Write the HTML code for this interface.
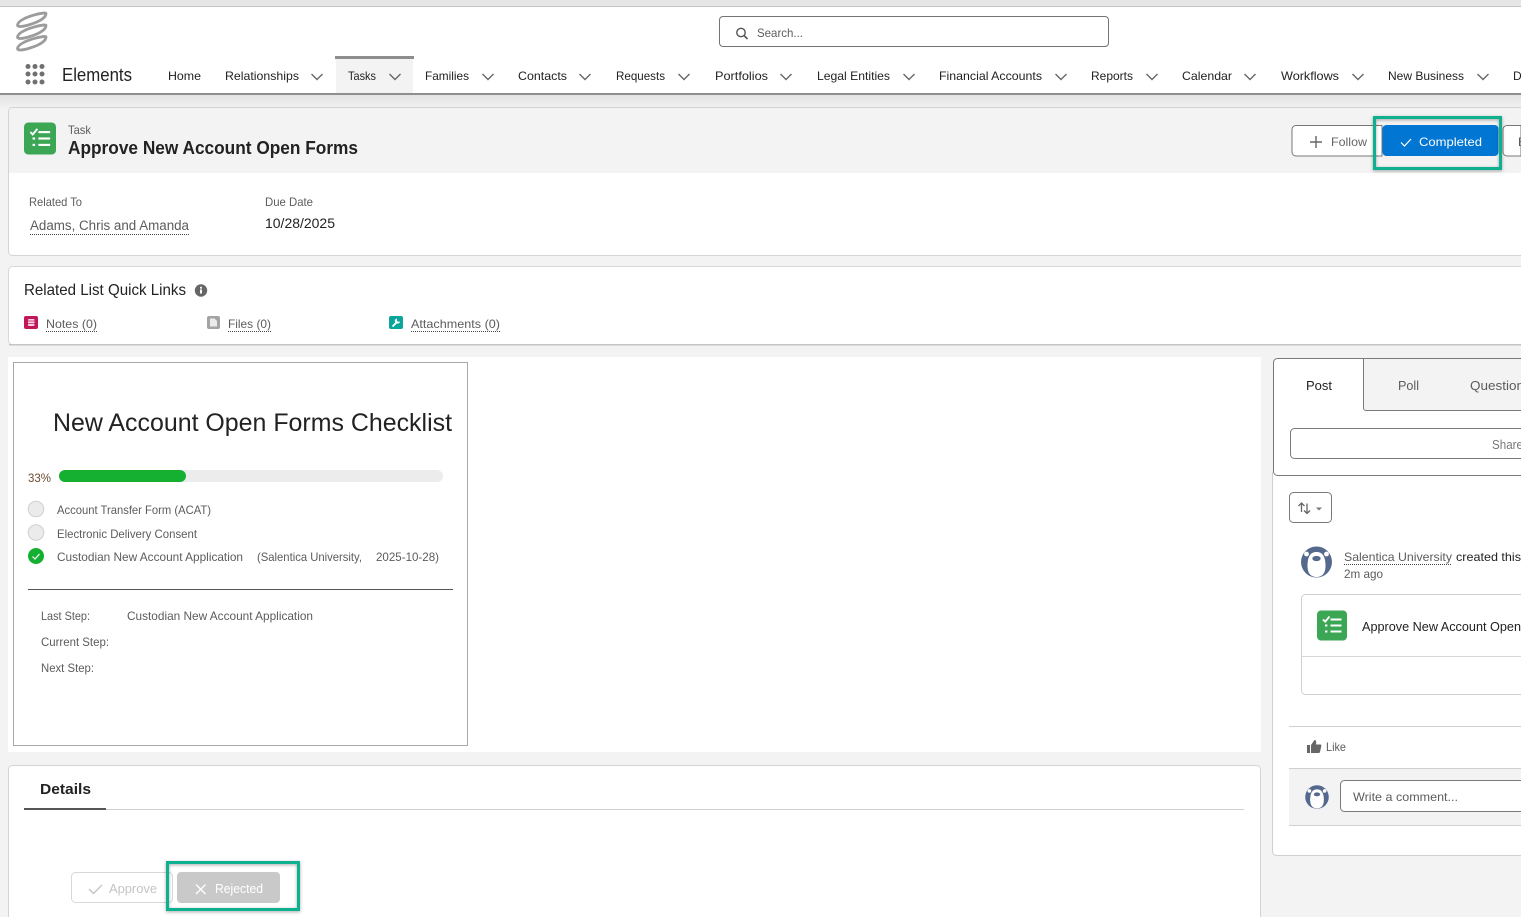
<!DOCTYPE html>
<html lang="en"><head><meta charset="utf-8"><title>Task - Approve New Account Open Forms</title>
<style>
html,body{margin:0;padding:0;width:1521px;height:917px;overflow:hidden;background:#f3f3f3}
svg{display:block}
text{font-family:"Liberation Sans",sans-serif;font-size:12px;fill:#3a3a3a}
.d{fill:#222}
.g{fill:#5c5c5c}
.u{stroke:#444;stroke-width:1;stroke-dasharray:1 1;fill:none}
.c{fill:none;stroke:#666;stroke-width:1.4}
</style></head><body>
<svg xmlns="http://www.w3.org/2000/svg" width="1521" height="917" viewBox="0 0 1521 917">
<defs>
<linearGradient id="sh" x1="0" y1="0" x2="0" y2="1"><stop offset="0" stop-color="#e2e2e2"/><stop offset="1" stop-color="#f3f3f3"/></linearGradient>
<filter id="bs" x="-10%" y="-20%" width="120%" height="140%"><feDropShadow dx="0" dy="1" stdDeviation="1.5" flood-color="#000" flood-opacity=".35"/></filter>
<g id="ck"><rect x="0" y="0" width="30" height="30" rx="4" fill="#3ba755"/><path d="M6 9l2.2 2.2L12.5 6" fill="none" stroke="#fff" stroke-width="1.8"/><rect x="13.5" y="8" width="11" height="2" fill="#fff"/><rect x="13.5" y="14" width="11" height="2" fill="#fff"/><rect x="13.5" y="20" width="11" height="2" fill="#fff"/><rect x="8" y="14" width="2.4" height="2" fill="#fff"/><rect x="8" y="20" width="2.4" height="2" fill="#fff"/></g>
<clipPath id="av1"><circle cx="0" cy="0" r="15.5"/></clipPath>
<g id="bear"><circle r="15.5" fill="#54698d"/><circle cx="-10" cy="-8" r="2.4" fill="#fff"/><circle cx="10" cy="-8" r="2.4" fill="#fff"/><path d="M-9 4C-9-7-5-10 0-10S9-7 9 4C9 12 5 15 0 15S-9 12-9 4Z" fill="#fff" clip-path="url(#av1)"/><ellipse cx="0" cy="-3.500" rx="4.200" ry="2.600" fill="#54698d"/></g>
</defs>

<!-- page background -->
<rect width="1521" height="917" fill="#f3f3f3"/>
<rect y="95" width="1521" height="14" fill="url(#sh)"/>
<rect width="1521" height="6" fill="#e6e6e6"/>
<rect y="6" width="1521" height="1" fill="#c4c4c4"/>

<!-- header -->
<rect y="7" width="1521" height="86" fill="#fff"/>
<rect y="93" width="1521" height="2" fill="#8e8e8e"/>
<g fill="none" stroke="#9c9c9c" stroke-width="2.800" stroke-linejoin="round">
<path d="M17.500 25C18 20.500 28 16.500 36 14.500C42 13 46 12.500 46 13.500C46 18 38 22 30 24.500C24 26.500 17.500 27.500 17.500 25Z"/>
<path d="M17.500 37C18 32.500 28 28.500 36 26.500C42 25 46 24.500 46 25.500C46 30 38 34 30 36.500C24 38.500 17.500 39.500 17.500 37Z"/>
<path d="M17.500 48.500C18 44 28 40 36 38C42 36.500 46 36 46 37C46 41.500 38 45.500 30 48C24 50 17.500 51 17.500 48.500Z"/>
</g>
<g fill="#707070">
<circle cx="28" cy="66.500" r="2.500"/><circle cx="35" cy="66.500" r="2.500"/><circle cx="42" cy="66.500" r="2.500"/>
<circle cx="28" cy="74" r="2.500"/><circle cx="35" cy="74" r="2.500"/><circle cx="42" cy="74" r="2.500"/>
<circle cx="28" cy="82" r="2.500"/><circle cx="35" cy="82" r="2.500"/><circle cx="42" cy="82" r="2.500"/>
</g>
<text x="62" y="81" class="d" style="font-size:18px" textLength="70" lengthAdjust="spacingAndGlyphs">Elements</text>

<rect x="719.500" y="16.500" width="389" height="30" rx="3.500" fill="#fff" stroke="#747474"/>
<circle cx="741" cy="32.500" r="4.200" fill="none" stroke="#555" stroke-width="1.400"/><path d="M744 35.500l3.500 3.500" stroke="#555" stroke-width="1.600"/>
<text x="757" y="37" class="g" textLength="46" lengthAdjust="spacingAndGlyphs">Search...</text>

<rect x="336" y="59" width="77" height="34" fill="#f3f3f3"/>
<rect x="335" y="56" width="79" height="3" fill="#8e8e8e"/>
<g>
<text x="168" y="80" class="d" textLength="33" lengthAdjust="spacingAndGlyphs">Home</text>
<text x="225" y="80" class="d" textLength="74" lengthAdjust="spacingAndGlyphs">Relationships</text>
<text x="348" y="80" class="d" textLength="28" lengthAdjust="spacingAndGlyphs">Tasks</text>
<text x="425" y="80" class="d" textLength="44" lengthAdjust="spacingAndGlyphs">Families</text>
<text x="518" y="80" class="d" textLength="49" lengthAdjust="spacingAndGlyphs">Contacts</text>
<text x="616" y="80" class="d" textLength="49" lengthAdjust="spacingAndGlyphs">Requests</text>
<text x="715" y="80" class="d" textLength="53" lengthAdjust="spacingAndGlyphs">Portfolios</text>
<text x="817" y="80" class="d" textLength="73" lengthAdjust="spacingAndGlyphs">Legal Entities</text>
<text x="939" y="80" class="d" textLength="103" lengthAdjust="spacingAndGlyphs">Financial Accounts</text>
<text x="1091" y="80" class="d" textLength="42" lengthAdjust="spacingAndGlyphs">Reports</text>
<text x="1182" y="80" class="d" textLength="50" lengthAdjust="spacingAndGlyphs">Calendar</text>
<text x="1281" y="80" class="d" textLength="58" lengthAdjust="spacingAndGlyphs">Workflows</text>
<text x="1388" y="80" class="d" textLength="76" lengthAdjust="spacingAndGlyphs">New Business</text>
<text x="1513" y="80" class="d">D</text>
</g>
<g class="c">
<path d="M311.500 74l5.500 5.500 5.500-5.500"/><path d="M389.500 74l5.500 5.500 5.500-5.500"/><path d="M482.500 74l5.500 5.500 5.500-5.500"/><path d="M579.500 74l5.500 5.500 5.500-5.500"/><path d="M678.500 74l5.500 5.500 5.500-5.500"/><path d="M780.500 74l5.500 5.500 5.500-5.500"/><path d="M903.500 74l5.500 5.500 5.500-5.500"/><path d="M1055.500 74l5.500 5.500 5.500-5.500"/><path d="M1146.500 74l5.500 5.500 5.500-5.500"/><path d="M1244.500 74l5.500 5.500 5.500-5.500"/><path d="M1352.500 74l5.500 5.500 5.500-5.500"/><path d="M1477.500 74l5.500 5.500 5.500-5.500"/>
</g>

<!-- task card -->
<rect x="8.500" y="107.500" width="1530" height="148" rx="4" fill="#fff" stroke="#d4d4d4"/>
<path d="M9 173V112a4 4 0 0 1 4-4H1521V173Z" fill="#f3f3f3"/>
<use href="#ck" transform="translate(24 122.500) scale(1.067 1.067)"/>
<text x="68" y="134" class="g" textLength="23" lengthAdjust="spacingAndGlyphs">Task</text>
<text x="68" y="154" class="d" style="font-size:18px;font-weight:700" textLength="290" lengthAdjust="spacingAndGlyphs">Approve New Account Open Forms</text>

<path d="M1382 125.500H1296a4 4 0 0 0-4 4V152a4 4 0 0 0 4 4h86Z" fill="#fff" stroke="#777"/>
<path d="M1310 142h12M1316 136v12" stroke="#666" stroke-width="1.400"/>
<text x="1331" y="146" style="fill:#666" textLength="36" lengthAdjust="spacingAndGlyphs">Follow</text>
<rect x="1382.500" y="125" width="116" height="31" rx="4" fill="#0176d3"/>
<path d="M1401 142.500l3.500 3.500 6.500-7" fill="none" stroke="#fff" stroke-width="1.200"/>
<text x="1419" y="146" style="fill:#fff" textLength="63" lengthAdjust="spacingAndGlyphs">Completed</text>
<path d="M1521 125.500H1507a4 4 0 0 0-4 4V152a4 4 0 0 0 4 4h14Z" fill="#fff" stroke="#777"/>
<text x="1518" y="146" class="g">E</text>
<rect x="1374.500" y="117.500" width="126" height="51" fill="none" stroke="#0ab08f" stroke-width="3" filter="url(#bs)"/>

<text x="29" y="206" class="g" textLength="53" lengthAdjust="spacingAndGlyphs">Related To</text>
<text x="30" y="230" class="g" style="font-size:13.500px" textLength="159" lengthAdjust="spacingAndGlyphs">Adams, Chris and Amanda</text>
<path class="u" d="M30 234.500H189"/>
<text x="265" y="206" class="g" textLength="48" lengthAdjust="spacingAndGlyphs">Due Date</text>
<text x="265" y="228" class="d" style="font-size:13.500px" textLength="70" lengthAdjust="spacingAndGlyphs">10/28/2025</text>

<!-- quick links -->
<rect x="8.500" y="266.500" width="1530" height="78" rx="4" fill="#fff" stroke="#d8d8d8"/>
<rect x="9" y="344" width="1512" height="1.500" fill="#c4c4c4"/>
<text x="24" y="295" class="d" style="font-size:16px" textLength="162" lengthAdjust="spacingAndGlyphs">Related List Quick Links</text>
<circle cx="201" cy="290.500" r="6.200" fill="#666"/><rect x="200" y="289.500" width="2" height="4" fill="#fff"/><rect x="200" y="286.800" width="2" height="1.800" fill="#fff"/>
<rect x="24" y="316" width="14" height="13" rx="2" fill="#c2185b"/><rect x="28" y="319" width="6.500" height="7" rx="1" fill="#f7d5e2"/><path d="M28 321h6.500M28 323.500h6.500" stroke="#c2185b" stroke-width=".8"/>
<text x="46" y="328" class="g" textLength="51" lengthAdjust="spacingAndGlyphs">Notes (0)</text><path class="u" d="M46 331.500H97"/>
<rect x="207" y="316" width="13" height="13" rx="2" fill="#a4a4a4"/><path d="M210 318.500h4.500l2.500 2.500v5.500h-7Z" fill="#ececec"/>
<text x="228" y="328" class="g" textLength="43" lengthAdjust="spacingAndGlyphs">Files (0)</text><path class="u" d="M228 331.500H271"/>
<rect x="389" y="316" width="14" height="13" rx="2" fill="#0aa69b"/><path d="M392.500 326.500l4.500-4.500" stroke="#fff" stroke-width="1.800"/><path d="M397 318.500a2.600 2.600 0 1 0 3 3l-2 .2-1-1Z" fill="#fff"/>
<text x="411" y="328" class="g" textLength="89" lengthAdjust="spacingAndGlyphs">Attachments (0)</text><path class="u" d="M411 331.500H500"/>

<!-- checklist -->
<rect x="8" y="357" width="1253" height="395" fill="#fff"/>
<rect x="13.500" y="362.500" width="454" height="383" fill="#fff" stroke="#a8a8a8"/>
<text x="53" y="431" class="d" style="font-size:25px" textLength="399" lengthAdjust="spacingAndGlyphs">New Account Open Forms Checklist</text>
<text x="28" y="482" style="fill:#6a4a30" textLength="23" lengthAdjust="spacingAndGlyphs">33%</text>
<rect x="59" y="470" width="384" height="12" rx="6" fill="#ececec"/>
<rect x="59" y="470" width="127" height="12" rx="6" fill="#15b032"/>
<circle cx="36" cy="509" r="7.800" fill="#ebebeb" stroke="#d0d0d0"/>
<text x="57" y="514" class="g" textLength="154" lengthAdjust="spacingAndGlyphs">Account Transfer Form (ACAT)</text>
<circle cx="36" cy="532.500" r="7.800" fill="#ebebeb" stroke="#d0d0d0"/>
<text x="57" y="538" class="g" textLength="140" lengthAdjust="spacingAndGlyphs">Electronic Delivery Consent</text>
<circle cx="36" cy="556" r="8" fill="#15b032"/><path d="M32.500 556.500l2.500 2.500 4.500-5" fill="none" stroke="#fff" stroke-width="1.200"/>
<text x="57" y="561" class="g" textLength="186" lengthAdjust="spacingAndGlyphs">Custodian New Account Application</text>
<text x="257" y="561" class="g" textLength="105" lengthAdjust="spacingAndGlyphs">(Salentica University,</text>
<text x="376" y="561" class="g" textLength="63" lengthAdjust="spacingAndGlyphs">2025-10-28)</text>
<rect x="28" y="589" width="425" height="1" fill="#555"/>
<text x="41" y="620" class="g" textLength="49" lengthAdjust="spacingAndGlyphs">Last Step:</text>
<text x="127" y="620" class="g" textLength="186" lengthAdjust="spacingAndGlyphs">Custodian New Account Application</text>
<text x="41" y="646" class="g" textLength="68" lengthAdjust="spacingAndGlyphs">Current Step:</text>
<text x="41" y="672" class="g" textLength="53" lengthAdjust="spacingAndGlyphs">Next Step:</text>

<!-- details -->
<rect x="8.500" y="765.500" width="1252" height="170" rx="4" fill="#fff" stroke="#d4d4d4"/>
<text x="40" y="794" class="d" style="font-size:15px;font-weight:700" textLength="51" lengthAdjust="spacingAndGlyphs">Details</text>
<rect x="24" y="809" width="1220" height="1" fill="#cfcfcf"/>
<rect x="24" y="808" width="82" height="2" fill="#555"/>
<rect x="71.500" y="872.500" width="101" height="30" rx="4" fill="#fff" stroke="#d8d8d8"/>
<path d="M89 889l4.500 4.500 8.500-8.500" fill="none" stroke="#c4c4c4" stroke-width="1.400"/>
<text x="109" y="893" style="fill:#c4c4c4;font-size:13px" textLength="48" lengthAdjust="spacingAndGlyphs">Approve</text>
<rect x="177" y="872" width="103" height="31" rx="4" fill="#c9c9c9"/>
<path d="M196 884.500l9.500 9.500M205.500 884.500l-9.500 9.500" stroke="#fff" stroke-width="1.400"/>
<text x="215" y="893" style="fill:#fff;font-size:13px" textLength="48" lengthAdjust="spacingAndGlyphs">Rejected</text>
<rect x="167.500" y="862.500" width="131" height="47" fill="none" stroke="#0ab08f" stroke-width="3" filter="url(#bs)"/>

<!-- right panel: feed -->
<rect x="1272.500" y="470" width="280" height="385.500" rx="4" fill="#fff" stroke="#d0d0d0"/>
<!-- composer -->
<rect x="1273.500" y="358.500" width="280" height="117" rx="4" fill="#fff" stroke="#7a7a7a"/>
<path d="M1363.500 359H1521V410.500H1366a2.500 2.500 0 0 1-2.500-2.500Z" fill="#f3f3f3"/>
<path d="M1363.500 358.500V408a2.500 2.500 0 0 0 2.500 2.500H1521" fill="none" stroke="#7a7a7a"/>
<text x="1306" y="390" class="d" style="font-size:13px" textLength="26" lengthAdjust="spacingAndGlyphs">Post</text>
<text x="1398" y="390" class="g" style="font-size:13px" textLength="21" lengthAdjust="spacingAndGlyphs">Poll</text>
<text x="1470" y="390" class="g" style="font-size:13px" textLength="54" lengthAdjust="spacingAndGlyphs">Question</text>
<rect x="1290.500" y="428.500" width="280" height="30" rx="4" fill="#fff" stroke="#7a7a7a"/>
<text x="1492" y="449" style="fill:#777;font-size:13px" textLength="31" lengthAdjust="spacingAndGlyphs">Share</text>

<rect x="1289.500" y="492.500" width="42" height="30" rx="4" fill="#fff" stroke="#7a7a7a"/>
<path d="M1301.500 512v-9M1298.500 506l3-3 3 3M1307 503.500v10M1304 510.500l3 3 3-3" fill="none" stroke="#666" stroke-width="1.300"/>
<path d="M1316 507.500h6l-3 3Z" fill="#777"/>

<use href="#bear" transform="translate(1316.500 562)"/>
<text x="1344" y="561" class="g" textLength="108" lengthAdjust="spacingAndGlyphs">Salentica University</text><path class="u" d="M1344 564.500H1452"/>
<text x="1456" y="561" class="d" textLength="65" lengthAdjust="spacingAndGlyphs">created this</text>
<text x="1344" y="578" class="g" textLength="39" lengthAdjust="spacingAndGlyphs">2m ago</text>

<rect x="1301.500" y="594.500" width="280" height="100" rx="4" fill="#fff" stroke="#d0d0d0"/>
<rect x="1302" y="656" width="219" height="1" fill="#d8d8d8"/>
<use href="#ck" transform="translate(1317 610.500)"/>
<text x="1362" y="631" class="d" style="font-size:13px" textLength="159" lengthAdjust="spacingAndGlyphs">Approve New Account Open</text>

<rect x="1289" y="726" width="232" height="1" fill="#d0d0d0"/>
<path d="M1307 745h3v8h-3ZM1311 745l3.500-5c1.500 0 2 1 1.500 4.500h4.500c.8 0 1 .8.800 1.500l-1.300 6c-.2.600-.5 1-1.300 1H1311Z" fill="#666"/>
<text x="1326" y="751" class="g" textLength="20" lengthAdjust="spacingAndGlyphs">Like</text>
<rect x="1289" y="768" width="232" height="58" fill="#f3f3f3"/>
<rect x="1289" y="768" width="232" height="1" fill="#d0d0d0"/>
<rect x="1289" y="825" width="232" height="1" fill="#d0d0d0"/>
<use href="#bear" transform="translate(1317 797) scale(.76)"/>
<rect x="1340.500" y="780.500" width="280" height="31" rx="4" fill="#fff" stroke="#7a7a7a"/>
<text x="1353" y="801" class="g" textLength="105" lengthAdjust="spacingAndGlyphs">Write a comment...</text>
</svg>
</body></html>
